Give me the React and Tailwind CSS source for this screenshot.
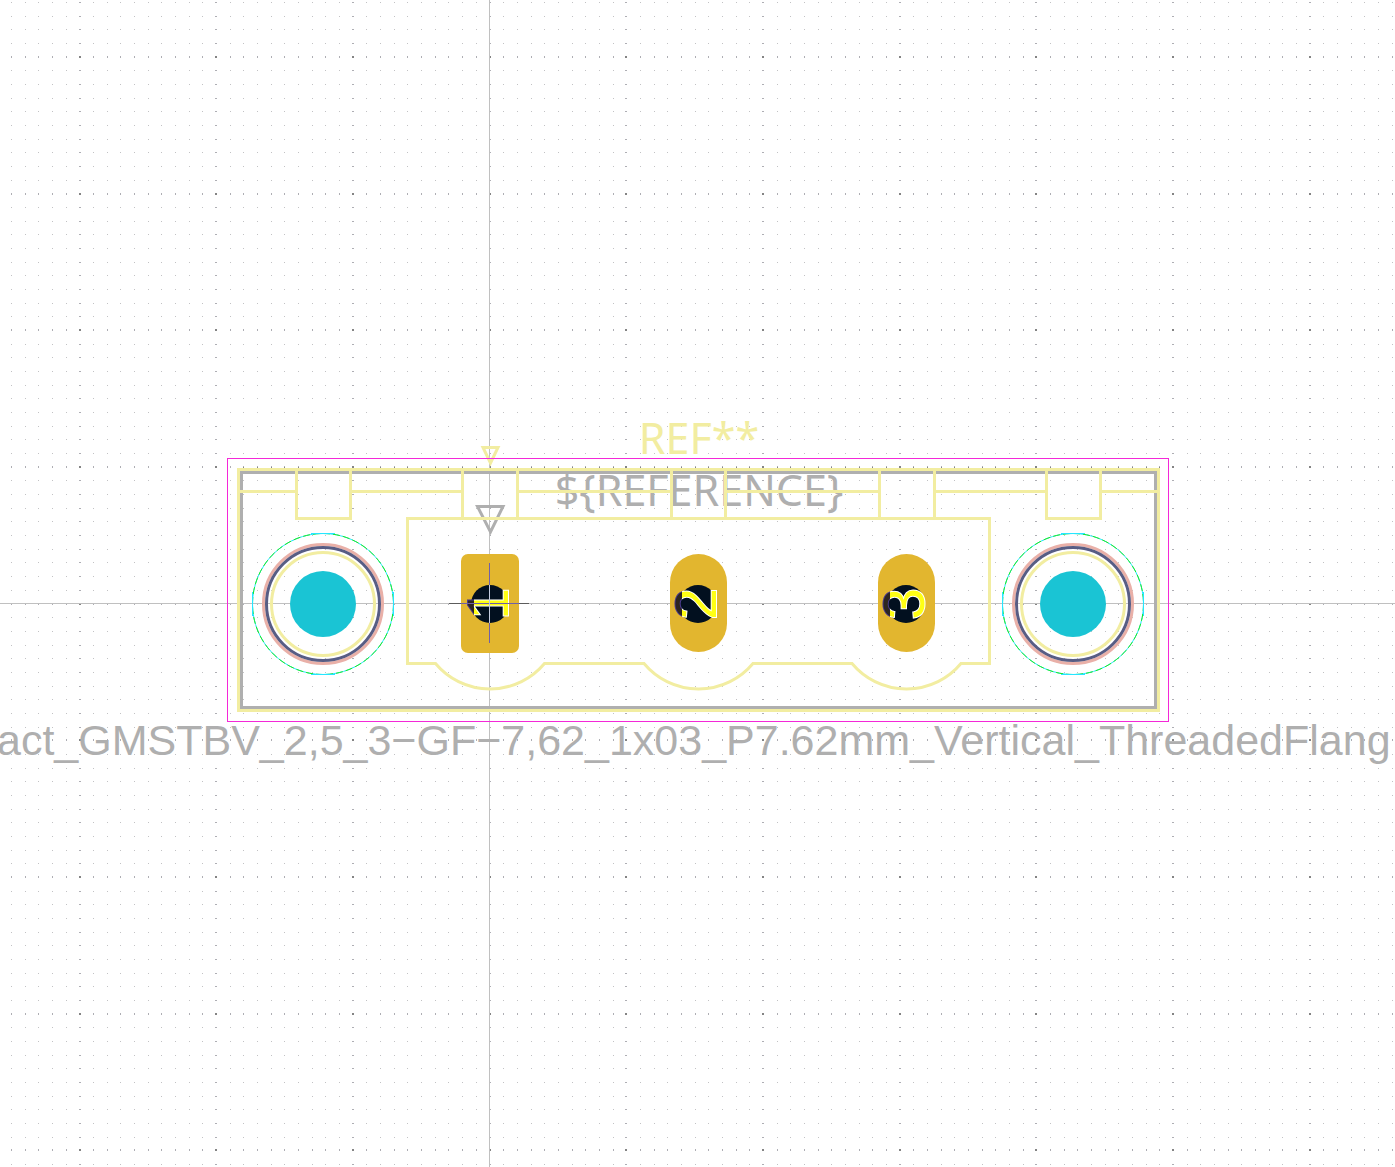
const PITCH = 13.67;
const ORIGIN = { x: 489.5, y: 603.5 };

const ticks = (origin, limit) => {
  const list = [];
  for (let i = -60; i <= 80; i += 1) {
    const v = origin + i * PITCH;
    if (v < 0 || v > limit) continue;
    const major = i % 10 === 0;
    list.push({ at: major ? Math.floor(v - 0.35) : Math.round(v), size: major ? 2 : 1 });
  }
  return list;
};

const COLUMNS = ticks(ORIGIN.x, 1395);
const ROWS = ticks(ORIGIN.y, 1167);

const dots = (keep) =>
  ROWS.flatMap((r) =>
    COLUMNS.filter((c) => keep(c, r)).map((c) => `M${c.at} ${r.at}h${c.size}v${r.size}h-${c.size}z`)
  ).join("");

const MINOR = dots((c, r) => c.size + r.size === 2);
const MIDDLE = dots((c, r) => c.size + r.size === 3);
const MAJOR = dots((c, r) => c.size + r.size === 4);
const EDGE_DOTS = COLUMNS.filter((c) => c.at > 236 && c.at < 1160)
  .map((c) => `M${c.at} 467h${c.size}v1h-${c.size}z`)
  .join("");

function Grid() {
  return (
    <g shapeRendering="crispEdges">
      <path d={MINOR} className="fill-[#c2c2c4]" />
      <path d={MIDDLE} className="fill-[#aeaeb4]" />
      <path d={MAJOR} className="fill-[#848484]" />
      <path d={EDGE_DOTS} className="fill-[#848484]" />
      <path d="M489 0h1v1167h-1zM0 603h1395v1h-1395z" className="fill-[#c0c0c0]" />
    </g>
  );
}

function FabLayer() {
  return (
    <g className="fill-none stroke-[#afafaf] stroke-3">
      <rect x="241.5" y="472.5" width="914" height="235" />
      <path d="M477.5 506.5H503L490.5 532Z" />
    </g>
  );
}

function SilkLayer() {
  return (
    <g className="fill-none stroke-[#f2eda1] stroke-3">
      <rect x="238.5" y="469.5" width="920" height="241" />
      <path d="M240 491.5H295M352 491.5H461M519 491.5H670M727 491.5H878M936 491.5H1045M1102 491.5H1157" />
      <path d="M296.5 471V518.5H350.5V471M1046.5 471V518.5H1100.5V471" />
      <path d="M462.5 471V517M517.5 471V517M671.5 471V517M725.5 471V517M879.5 471V517M934.5 471V517" />
      <path d="M407.5 518.5H989.5V663.5H961A71 71 0 0 1 852 663.5H753A71 71 0 0 1 644 663.5H544.5A71 71 0 0 1 435.5 663.5H407.5Z" />
      <path d="M483 447.5H498L490.5 463Z" />
    </g>
  );
}

function MountingHole({ cx }) {
  return (
    <g className="fill-none">
      <circle cx={cx} cy="604" r="70.5" className="stroke-[#26e6ff] stroke-1" />
      <circle cx={cx} cy="604" r="70.5" className="stroke-[#1fea1f] stroke-1" strokeDasharray="7 3" pathLength="440" />
      <path
        d={`M${cx - 12} 533.5h24M${cx - 12} 674.5h24M${cx - 70.5} 592v24M${cx + 70.5} 592v24`}
        className="stroke-[#26e6ff] stroke-1"
      />
      <circle cx={cx} cy="604" r="59.5" className="stroke-[#e9b0a8] stroke-3" />
      <circle cx={cx} cy="604" r="56.5" className="stroke-[#585d84] stroke-3" />
      <circle cx={cx} cy="604" r="51.5" className="stroke-[#f2eda1] stroke-3" />
      <circle cx={cx} cy="604" r="33" className="fill-[#1ac4d4]" />
    </g>
  );
}

function Pad({ number, cx, children }) {
  return (
    <g>
      <g className="fill-[#e2b62f]">{children}</g>
      <circle cx={cx} cy="604" r="19" className="fill-[#02101f]" />
      <text
        transform={`translate(${cx + 18} 604) rotate(-90)`}
        textAnchor="middle"
        fill="url(#pad-number)"
        stroke="url(#pad-number-edge)"
        className="stroke-2 font-['Liberation_Sans',sans-serif] text-[57px]"
        paintOrder="stroke"
      >
        {number}
      </text>
    </g>
  );
}

export default function App() {
  return (
    <main className="flex h-screen w-full overflow-hidden bg-white">
      <svg
        viewBox="0 0 1395 1167"
        preserveAspectRatio="xMidYMid slice"
        className="block h-full w-full"
        role="img"
        aria-label="Connector footprint"
      >
        <defs>
          <linearGradient id="pad-number" gradientUnits="userSpaceOnUse" x1="0" y1="-42" x2="0" y2="0">
            <stop offset="0.2" stopColor="#2d2620" />
            <stop offset="0.2" stopColor="#ffff14" />
          </linearGradient>
          <linearGradient id="pad-number-edge" gradientUnits="userSpaceOnUse" x1="0" y1="-42" x2="0" y2="0">
            <stop offset="0.2" stopColor="#4a3a8c" />
            <stop offset="0.2" stopColor="#ffffff" />
          </linearGradient>
        </defs>
        <Grid />
        <FabLayer />
        <g className="fill-[#afafaf]">
          <text x="699" y="506" textAnchor="middle" className="font-['Noto_Sans',sans-serif] text-[43px]">
            {"${REFERENCE}"}
          </text>
          <text x="-3" y="755" className="font-['Liberation_Sans',sans-serif] text-[43px]">
            act_GMSTBV_2,5_3−GF−7,62_1x03_P7.62mm_Vertical_ThreadedFlang
          </text>
        </g>
        <SilkLayer />
        <text
          x="699"
          y="454"
          textAnchor="middle"
          className="fill-[#f2eda1] font-['Noto_Sans',sans-serif] text-[43px]"
        >
          REF**
        </text>
        <rect x="227.5" y="458.5" width="941" height="263" className="fill-none stroke-[#f428d8] stroke-1" />
        <MountingHole cx={323} />
        <MountingHole cx={1073} />
        <Pad number="1" cx={490}>
          <rect x="461" y="554" width="58" height="99" rx="7" />
        </Pad>
        <Pad number="2" cx={698}>
          <rect x="670" y="554" width="57" height="98" rx="28.5" />
        </Pad>
        <Pad number="3" cx={906}>
          <rect x="878" y="554" width="57" height="98" rx="28.5" />
        </Pad>
        <g shapeRendering="crispEdges">
          <path d="M449 603h80v1h-80z" className="fill-[#5c5c5c]" />
          <path d="M461 603h58v1h-58zM489 563h1v80h-1z" className="fill-[#7060a8]" />
          <path d="M489 585h1v38h-1z" className="fill-[#c4cce0]" />
        </g>
      </svg>
    </main>
  );
}
